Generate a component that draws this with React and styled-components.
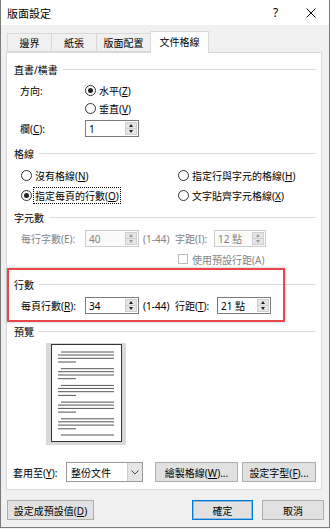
import React from 'react'
import styled, { createGlobalStyle } from 'styled-components'

const GlobalStyle = createGlobalStyle`
  html, body {
    margin: 0;
    padding: 0;
    background: #f0f0f0;
  }
  body {
    font-family: "Noto Sans", "Noto Sans CJK TC", "Microsoft JhengHei", sans-serif;
    font-size: 10px;
    color: #000;
  }
  * { box-sizing: border-box; }
`

const Window = styled.div`
  width: 330px;
  height: 528px;
  background: #f0f0f0;
  border: 1px solid #7a7a7a;
  border-top: none;
  display: flex;
  flex-direction: column;
`

const TitleBar = styled.div`
  height: 25px;
  background: #fff;
  display: flex;
  align-items: center;
  padding-left: 6px;
  font-size: 11px;
  .title { flex: 1; }
  .help { width: 8px; margin-right: 25px; font-size: 12px; }
  svg { margin-right: 13px; }
`

const Body = styled.div`
  padding: 0 5px;
`

const Tabs = styled.div`
  display: flex;
  align-items: flex-end;
  height: 19px;
  margin: 8px 0 0 1px;
`

const Tab = styled.div`
  width: ${p => p.$w}px;
  height: ${p => (p.$active ? 22 : 19)}px;
  margin-left: ${p => (p.$first ? 0 : -1)}px;
  margin-bottom: ${p => (p.$active ? -1 : 0)}px;
  border: 1px solid #d9d9d9;
  border-bottom: ${p => (p.$active ? 'none' : '1px solid #d9d9d9')};
  background: ${p => (p.$active ? '#fff' : '#f0f0f0')};
  display: flex;
  align-items: center;
  justify-content: center;
  position: relative;
  z-index: ${p => (p.$active ? 2 : 1)};
  padding-bottom: ${p => (p.$active ? 2 : 0)}px;
`

const Panel = styled.div`
  position: relative;
  width: 316px;
  height: 438px;
  background: #fff;
  border: 1px solid #d9d9d9;
  padding: 0 5px 0 7px;
`

const Heading = styled.div`
  display: flex;
  align-items: center;
  height: 14px;
  margin-top: ${p => p.$mt}px;
  &::after {
    content: '';
    flex: 1;
    height: 1px;
    background: #dcdcdc;
    margin-left: 5px;
  }
`

const Row = styled.div`
  display: flex;
  align-items: center;
  height: ${p => p.$h || 16}px;
  margin-top: ${p => p.$mt}px;
  padding-left: ${p => (p.$pl === undefined ? 7 : p.$pl)}px;
  margin-left: ${p => p.$ml || 0}px;
  color: ${p => (p.$disabled ? '#838383' : '#000')};
`

const Label = styled.span`
  width: ${p => p.$w}px;
  flex-shrink: 0;
  white-space: nowrap;
`

const Note = styled.span`
  width: 36px;
  padding-left: 4px;
  white-space: nowrap;
`

const Key = styled.span`
  text-decoration: underline;
  text-underline-offset: 1px;
`

const RadioGrid = styled.div`
  display: grid;
  grid-template-columns: 157px 1fr;
  height: 16px;
  align-items: center;
  margin-top: ${p => p.$mt}px;
  padding-left: 7px;
`

const RadioItem = styled.label`
  display: flex;
  align-items: center;
  gap: 3px;
  white-space: nowrap;
`

const RadioCircle = styled.span`
  width: 11px;
  height: 11px;
  border-radius: 50%;
  border: 1px solid #333;
  background: #fff;
  display: flex;
  align-items: center;
  justify-content: center;
  &::after {
    content: '';
    width: 5px;
    height: 5px;
    border-radius: 50%;
    background: ${p => (p.$checked ? '#222' : 'transparent')};
  }
`

const FocusText = styled.span`
  outline: ${p => (p.$focus ? '1px dotted #000' : 'none')};
  padding: 0 1px;
  margin-left: -1px;
`

const CheckBox = styled.span`
  width: 10px;
  height: 10px;
  border: 1px solid #bcbcbc;
  background: #fff;
  margin-right: 4px;
`

const SpinBox = styled.div`
  width: ${p => p.$w}px;
  height: 17px;
  display: flex;
  border: 1px solid ${p => (p.$disabled ? '#cccccc' : '#7a7a7a')};
  background: ${p => (p.$disabled ? '#fafafa' : '#fff')};
  color: ${p => (p.$disabled ? '#838383' : '#000')};
  .value {
    flex: 1;
    padding-left: 3px;
    display: flex;
    align-items: center;
  }
`

const SpinButtons = styled.div`
  width: 12px;
  display: flex;
  flex-direction: column;
  margin: 1px 1px 1px 0;
`

const SpinHalf = styled.span`
  flex: 1;
  background: #e5e5e5;
  border: 1px solid #cfcfcf;
  margin-top: ${p => (p.$down ? -1 : 0)}px;
  display: flex;
  align-items: center;
  justify-content: center;
  &::after {
    content: '';
    border-left: 2.5px solid transparent;
    border-right: 2.5px solid transparent;
    ${p => (p.$down ? 'border-top' : 'border-bottom')}: 3px solid ${p => (p.$disabled ? '#9a9a9a' : '#222')};
  }
`

const Highlight = styled.div`
  position: absolute;
  left: 0;
  top: 215px;
  width: 278px;
  height: 54px;
  border: 2px solid #e8464a;
  box-shadow: 0 0 3px rgba(0, 0, 0, 0.25);
  pointer-events: none;
`

const Preview = styled.svg`
  display: block;
  margin: 5px 0 0 32px;
`

const Select = styled.div`
  width: 77px;
  height: 20px;
  display: flex;
  border: 1px solid #9a9a9a;
  background: #fff;
  .value {
    flex: 1;
    padding-left: 4px;
    display: flex;
    align-items: center;
  }
  .drop {
    width: 15px;
    background: #e5e5e5;
    border-left: 1px solid #cccccc;
    display: flex;
    align-items: center;
    justify-content: center;
  }
`

const Button = styled.div`
  width: ${p => p.$w}px;
  height: 20px;
  margin-left: ${p => p.$ml || 0}px;
  background: #e1e1e1;
  border: 1px solid ${p => (p.$primary ? '#0078d7' : '#adadad')};
  box-shadow: ${p => (p.$primary ? 'inset 0 0 0 1px rgba(0,120,215,0.35)' : 'none')};
  display: flex;
  align-items: center;
  justify-content: center;
  white-space: nowrap;
`

const Footer = styled.div`
  display: flex;
  align-items: center;
  margin: 10px 0 0 1px;
  .spacer { flex: 1; }
`

function Spinner({ w, value, disabled }) {
  return (
    <SpinBox $w={w} $disabled={disabled}>
      <span className="value">{value}</span>
      <SpinButtons>
        <SpinHalf $disabled={disabled} />
        <SpinHalf $down $disabled={disabled} />
      </SpinButtons>
    </SpinBox>
  )
}

function Radio({ checked, focus, children }) {
  return (
    <RadioItem>
      <RadioCircle $checked={checked} />
      <FocusText $focus={focus}>{children}</FocusText>
    </RadioItem>
  )
}

function PagePreview() {
  const groups = [0, 1, 2, 3, 4]
  return (
    <Preview width="80" height="102" viewBox="0 0 80 102">
      <rect x="0" y="0" width="80" height="102" fill="#d9d9d9" />
      <rect x="5.5" y="1.5" width="70" height="97" fill="#fff" stroke="#333" />
      {groups.map(g => {
        const y = 9 + g * 16.7
        return (
          <g key={g} stroke="#555" strokeWidth="1">
            <line x1="15" x2="68" y1={y} y2={y} />
            <line x1="12" x2="68" y1={y + 3} y2={y + 3} />
            <line x1="12" x2="68" y1={y + 6.3} y2={y + 6.3} />
            <line x1="12" x2="30" y1={y + 10} y2={y + 10} />
          </g>
        )
      })}
      <line x1="15" x2="68" y1="92" y2="92" stroke="#555" />
    </Preview>
  )
}

export default function App() {
  return (
    <>
      <GlobalStyle />
      <Window>
        <TitleBar>
          <span className="title">版面設定</span>
          <span className="help">?</span>
          <svg width="10" height="10" viewBox="0 0 10 10">
            <path d="M0.5 0.5 L9.5 9.5 M9.5 0.5 L0.5 9.5" stroke="#000" strokeWidth="1" />
          </svg>
        </TitleBar>
        <Body>
          <Tabs>
            <Tab $w={45} $first>邊界</Tab>
            <Tab $w={46}>紙張</Tab>
            <Tab $w={55}>版面配置</Tab>
            <Tab $w={59} $active>文件格線</Tab>
          </Tabs>
          <Panel>
            <Heading $mt={9}>直書/橫書</Heading>
            <Row $mt={6} $pl={6}>
              <Label $w={65}>方向:</Label>
              <Radio checked>水平(<Key>Z</Key>)</Radio>
            </Row>
            <Row $mt={2} $pl={6}>
              <Label $w={65} />
              <Radio>垂直(<Key>V</Key>)</Radio>
            </Row>
            <Row $mt={4} $h={17} $pl={6}>
              <Label $w={65}>欄(<Key>C</Key>):</Label>
              <Spinner w={54} value="1" />
            </Row>

            <Heading $mt={9}>格線</Heading>
            <RadioGrid $mt={7}>
              <Radio>沒有格線(<Key>N</Key>)</Radio>
              <Radio>指定行與字元的格線(<Key>H</Key>)</Radio>
            </RadioGrid>
            <RadioGrid $mt={4}>
              <Radio checked focus>指定每頁的行數(<Key>O</Key>)</Radio>
              <Radio>文字貼齊字元格線(<Key>X</Key>)</Radio>
            </RadioGrid>

            <Heading $mt={7}>字元數</Heading>
            <Row $mt={6} $h={17} $disabled>
              <Label $w={64}>每行字數(E):</Label>
              <Spinner w={54} value="40" disabled />
              <Note>(1-44)</Note>
              <Label $w={39}>字距(I):</Label>
              <Spinner w={52} value="12 點" disabled />
            </Row>
            <Row $mt={4} $pl={164} $disabled>
              <CheckBox />
              <span>使用預設行距(A)</span>
            </Row>

            <Heading $mt={10}>行數</Heading>
            <Row $mt={6} $h={17}>
              <Label $w={64}>每頁行數(<Key>R</Key>):</Label>
              <Spinner w={54} value="34" />
              <Note>(1-44)</Note>
              <Label $w={42}>行距(<Key>T</Key>):</Label>
              <Spinner w={54} value="21 點" />
            </Row>

            <Heading $mt={10}>預覽</Heading>
            <PagePreview />

            <Row $mt={17} $h={20} $pl={0} $ml={-1}>
              <Label $w={53}>套用至(<Key>Y</Key>):</Label>
              <Select>
                <span className="value">整份文件</span>
                <span className="drop">
                  <svg width="8" height="5" viewBox="0 0 8 5">
                    <path d="M0.5 0.5 L4 4 L7.5 0.5" stroke="#444" fill="none" />
                  </svg>
                </span>
              </Select>
              <Button $w={83} $ml={12}><span>繪製格線(<Key>W</Key>)...</span></Button>
              <Button $w={74} $ml={4}><span>設定字型(<Key>F</Key>)...</span></Button>
            </Row>

            <Highlight />
          </Panel>
          <Footer>
            <Button $w={87}><span>設定成預設值(<Key>D</Key>)</span></Button>
            <span className="spacer" />
            <Button $w={61} $primary>確定</Button>
            <Button $w={62} $ml={9}>取消</Button>
          </Footer>
        </Body>
      </Window>
    </>
  )
}
